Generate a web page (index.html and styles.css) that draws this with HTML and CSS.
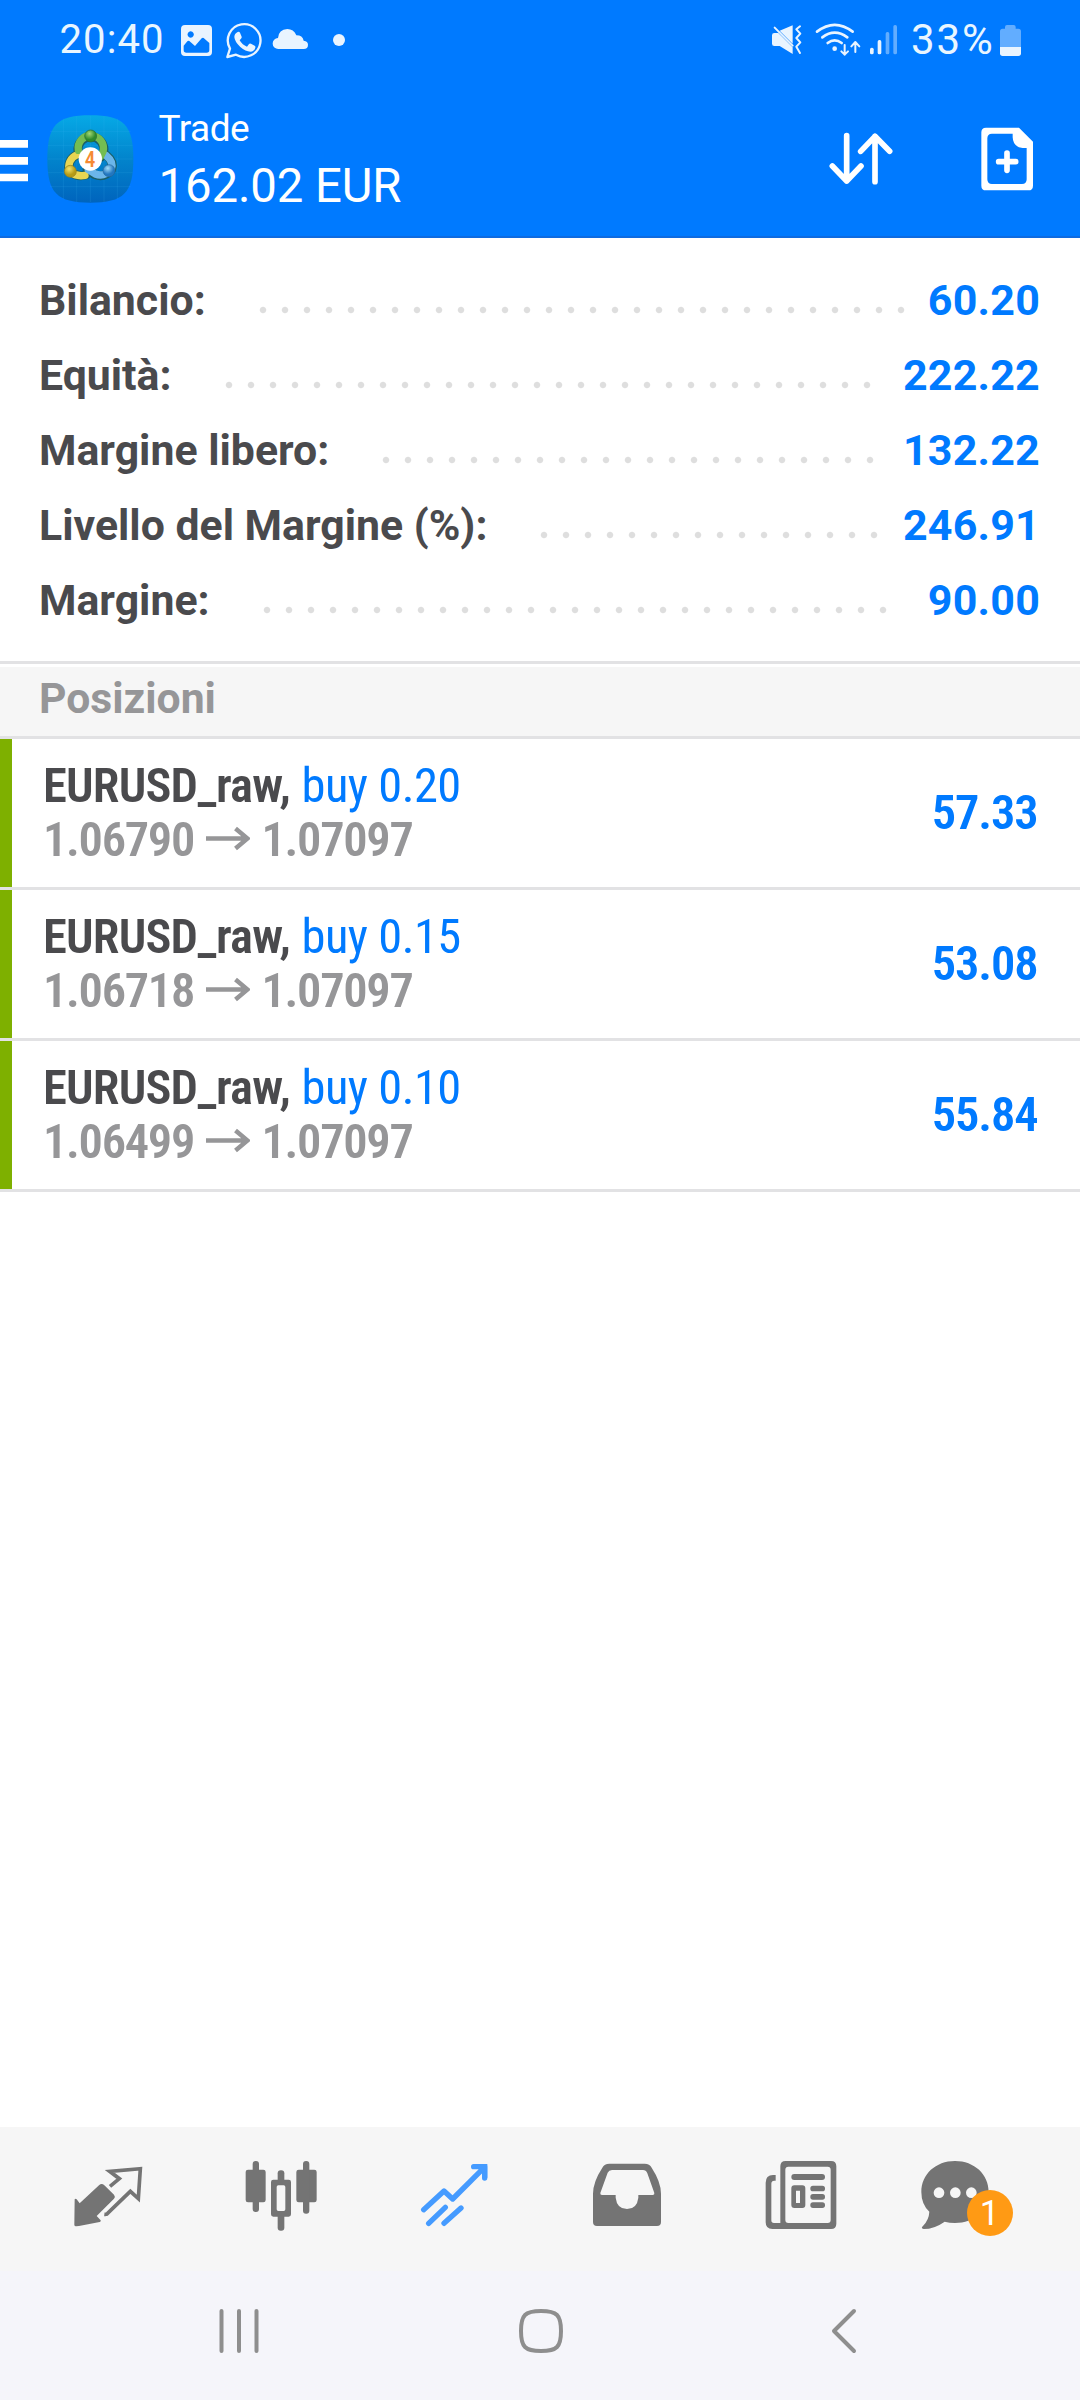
FILE: index.html
```html
<!DOCTYPE html>
<html lang="it">
<head>
<meta charset="utf-8">
<title>Trade</title>
<link rel="stylesheet" href="styles.css">
</head>
<body>
<div class="screen">
  <header class="header">
    <div class="status">
      <span class="clock">20:40</span>
      <svg class="st-image" viewBox="534 0 111 240"><path fill-rule="evenodd" d="M555 75h69q12 0 12 12v69q0 12-12 12h-69q-12 0-12-12V87q0-12 12-12zM551 137v13q0 8 8 8h61q8 0 8-8v-21l-17-15q-3-2-6 1l-20 23-17-15q-3-2-6 1zM572 94a9.500 9.500 0 1 0 .1 0z"/></svg>
      <svg class="st-chat" viewBox="666 0 126 240"><path class="line" stroke-width="7" stroke-linejoin="round" d="M682 171l8-25a49 49 0 1 1 18 18z"/><path d="M713 96q5-2 7 2l5 12q1 3-2 6l-4 5q8 14 22 19l6-8q2-3 6-1l11 6q3 2 2 6-3 11-15 12-14 0-30-14-17-16-18-30 0-10 10-15z"/></svg>
      <svg class="st-cloud" viewBox="810 0 123 240"><path d="M835 147a16 16 0 0 1-1-33q2-26 28-27 19 0 27 19 19 0 22 16 13 2 13 12 0 13-13 13z"/></svg>
      <svg class="st-dot" viewBox="990 0 54 240"><circle cx="1017" cy="120" r="18"/></svg>
      <svg class="st-mute" viewBox="84 0 114 240"><path d="M119 92l39-16v55zM103 99h12l43 43v20l-39-24h-16q-7 0-7-7v-25q0-7 7-7z"/><path class="line" stroke-width="6" stroke-linecap="round" stroke-linejoin="round" d="M104 83l54 54M180 79l-11 9 12 13-12 13 12 13-12 13 11 19"/></svg>
      <svg class="st-wifi" viewBox="219 0 150 240"><path class="line" stroke-width="8" stroke-linecap="round" d="M231 95q53-41 107 0M247 112q37-28 75 0M263 129q21-16 42 0"/><circle cx="284" cy="146" r="7"/><path class="line" stroke-width="6" stroke-linecap="round" stroke-linejoin="round" d="M314 135v29m-10-10l10 10 10-10M346 156v-29m-12 12l12-13 12 13"/></svg>
      <svg class="st-signal" viewBox="384 0 96 240"><rect x="390" y="143" width="11" height="20" rx="5"/><rect x="413" y="120" width="11" height="43" rx="5"/><g opacity=".42"><rect x="437" y="96" width="11" height="67" rx="5"/><rect x="460" y="75" width="11" height="88" rx="5"/></g></svg>
      <span class="charge">33%</span>
      <svg class="st-battery" viewBox="774 0 78 240"><path opacity=".42" d="M780 141V94q0-8 8-8h7v-5q0-6 6-6h20q6 0 6 6v5h8q8 0 8 8v47z"/><path d="M780 141h63v19q0 8-8 8h-47q-8 0-8-8z"/></svg>
    </div>
    <div class="app-bar">
      <svg class="menu" viewBox="0 240 120 474"><path fill="#fff" d="M0 420h84v23H0zM0 471h84v23H0zM0 521h84v23H0z"/></svg>
      <svg class="logo" viewBox="0 -84 300 474">
        <defs>
          <linearGradient id="bg" x1="0" y1="0" x2="0" y2="1"><stop offset="0" stop-color="#06a9e6"/><stop offset=".5" stop-color="#0284cc"/><stop offset="1" stop-color="#0064bd"/></linearGradient>
          <radialGradient id="green" cx=".4" cy=".3"><stop offset="0" stop-color="#a5d873"/><stop offset="1" stop-color="#2d8a2b"/></radialGradient>
          <radialGradient id="yellow" cx=".4" cy=".3"><stop offset="0" stop-color="#f6e468"/><stop offset="1" stop-color="#b59a16"/></radialGradient>
          <radialGradient id="blue" cx=".4" cy=".3"><stop offset="0" stop-color="#a3dcf8"/><stop offset="1" stop-color="#2277c0"/></radialGradient>
        </defs>
        <path fill="url(#bg)" d="M151 22c100 0 129 29 129 131s-29 131-129 131S22 255 22 153 51 22 151 22z"/>
        <path fill="none" stroke="#45bdf0" stroke-opacity=".22" stroke-width="2" d="M70 32v242M110 24v258M151 24v258M192 24v258M232 32v242M30 70h242M24 112h254M24 153h254M24 194h254M30 236h242"/>
        <g fill="none" stroke-linecap="round">
          <path stroke="#1b5f66" stroke-width="27" d="M114 129a39 39 0 1 1 77 4l-9 15M112 140a39 39 0 0 0-23 51q22 17 50 10M198 141q25 20 17 43-22 27-50 16l-24-14"/>
          <path stroke="#e8d552" stroke-width="22" d="M112 140a39 39 0 0 0-23 51q20 16 46 11"/>
          <path stroke="#6bb6ea" stroke-width="22" d="M198 142q24 20 16 41-22 26-48 15l-21-13"/>
          <path stroke="#74bd52" stroke-width="22" d="M115 127a38 38 0 1 1 74 4l-8 15"/>
        </g>
        <circle cx="152" cy="84" r="18" fill="url(#green)" stroke="#276d30" stroke-width="2"/>
        <circle cx="91" cy="190" r="18" fill="url(#yellow)" stroke="#937f1d" stroke-width="2"/>
        <circle cx="207" cy="188" r="18" fill="url(#blue)" stroke="#25669c" stroke-width="2"/>
        <circle cx="151" cy="153" r="35" fill="#fff"/>
        <text x="150" y="176" text-anchor="middle" class="logo-digit">4</text>
      </svg>
      <div class="title"><div class="title-name">Trade</div><div class="title-sum">162.02 EUR</div></div>
      <svg class="sort" viewBox="240 240 240 474"><path fill="none" stroke="#fff" stroke-width="17" stroke-linecap="round" stroke-linejoin="round" d="M320 407v136M277 498l43 45 43-45M405 545V409M362 454l43-45 44 45"/></svg>
      <svg class="add" viewBox="699 240 201 474"><path fill="#fff" fill-rule="evenodd" d="M738 383h99l42 42v132q0 14-14 14H738q-14 0-14-14V397q0-14 14-14zM756 401q-14 0-14 14v123q0 14 14 14h90q14 0 14-14v-94h-12q-29-3-30-32v-11z"/><path stroke="#fff" stroke-width="17" stroke-linecap="round" d="M776 485h51M801 459v52"/></svg>
    </div>
  </header>

  <section class="summary">
    <div class="sum-row"><span class="label">Bilancio:</span><i class="dots" style="--count:30"></i><span class="value">60.20</span></div>
    <div class="sum-row"><span class="label">Equità:</span><i class="dots" style="--count:30"></i><span class="value">222.22</span></div>
    <div class="sum-row"><span class="label">Margine libero:</span><i class="dots" style="--count:23"></i><span class="value">132.22</span></div>
    <div class="sum-row"><span class="label">Livello del Margine (%):</span><i class="dots" style="--count:16"></i><span class="value">246.91</span></div>
    <div class="sum-row"><span class="label">Margine:</span><i class="dots" style="--count:29"></i><span class="value">90.00</span></div>
  </section>

  <h2 class="section-title">Posizioni</h2>

  <main class="positions">
    <article class="position">
      <div class="info">
        <div class="deal"><b>EURUSD_raw,</b><span class="side">buy 0.20</span></div>
        <div class="prices"><span>1.06790</span><svg class="arrow" viewBox="0 0 44 54"><path d="M0 25.500h41M29.500 15.500l12 10-12 10"/></svg><span>1.07097</span></div>
      </div>
      <div class="profit">57.33</div>
    </article>
    <article class="position">
      <div class="info">
        <div class="deal"><b>EURUSD_raw,</b><span class="side">buy 0.15</span></div>
        <div class="prices"><span>1.06718</span><svg class="arrow" viewBox="0 0 44 54"><path d="M0 25.500h41M29.500 15.500l12 10-12 10"/></svg><span>1.07097</span></div>
      </div>
      <div class="profit">53.08</div>
    </article>
    <article class="position">
      <div class="info">
        <div class="deal"><b>EURUSD_raw,</b><span class="side">buy 0.10</span></div>
        <div class="prices"><span>1.06499</span><svg class="arrow" viewBox="0 0 44 54"><path d="M0 25.500h41M29.500 15.500l12 10-12 10"/></svg><span>1.07097</span></div>
      </div>
      <div class="profit">55.84</div>
    </article>
  </main>

  <nav class="tabs">
    <div class="tab"><svg viewBox="61 120 288 270">
      <path d="M105 268q2-4 6 0l9 12 58-54q8-8 16 0l29 28q5 6 0 12l-52 52 12 13q2 4-3 5l-62 12-9 1q-5 0-5-5z"/>
      <path class="line" stroke-width="11" d="M211 229l28-23-29-22 92-8-6 90-24-22-67 65q-3 5-11 4"/>
    </svg></div>
    <div class="tab"><svg viewBox="579 120 288 270">
      <rect x="617" y="179" width="60" height="98" rx="7"/><rect x="638" y="153" width="19" height="153" rx="9"/>
      <rect x="769" y="179" width="61" height="98" rx="7"/><rect x="789" y="153" width="19" height="158" rx="9"/>
      <rect x="713" y="181" width="20" height="40" rx="9"/><rect x="713" y="308" width="20" height="54" rx="9"/>
      <path fill-rule="evenodd" d="M700 209h46q7 0 7 7v97q0 7-7 7h-46q-7 0-7-7v-97q0-7 7-7zM715 226q-5 0-5 5v67q0 5 5 5h16q5 0 5-5v-67q0-5-5-5z"/>
    </svg></div>
    <div class="tab active"><svg viewBox="1097 120 288 270">
      <path class="line" stroke-width="16" stroke-linecap="round" stroke-linejoin="round" d="M1150 299l61-56 26 24 92-92M1300 170h33v34M1165 340l50-48M1211 340l51-46"/><path d="M1308 162h33v42l-12-14-14-14z"/>
    </svg></div>
    <div class="tab"><svg viewBox="55 120 288 270">
      <path fill-rule="evenodd" d="M149 161h106q15 0 21 12 28 43 28 78v85q0 12-12 12H112q-12 0-12-12v-85q0-35 28-78 6-12 21-12zM157 180q-9 0-13 8l-22 61q-1 6 5 6h41v8q4 34 34 34t34-34v-8h43q6 0 5-6l-21-59q-4-10-13-10z"/>
    </svg></div>
    <div class="tab"><svg viewBox="573 120 288 270">
      <path fill-rule="evenodd" d="M677 153h136q16 0 16 16v172q0 16-16 16H637q-20 0-20-20V218q0-22 22-23h8v17h-4q-9 0-9 9v110q0 8 8 8h19V169q0-16 16-16zM685 170q-9 0-9 9v151q0 9 9 9h118q9 0 9-9V179q0-9-9-9z"/>
      <rect x="694" y="192" width="101" height="18" rx="9"/><rect x="751" y="227" width="44" height="17" rx="8"/><rect x="751" y="252" width="44" height="17" rx="8"/><rect x="751" y="277" width="44" height="17" rx="8"/>
      <path fill-rule="evenodd" d="M703 226h24q9 0 9 9v50q0 9-9 9h-24q-9 0-9-9v-50q0-9 9-9zM708 242v37h12v-37z"/>
    </svg></div>
    <div class="tab"><div class="tab-icon"><svg class="wide" viewBox="1079 120 312 270">
      <path d="M1184 153c58 0 101 40 101 93s-43 93-101 93q-17 0-31-4-31 22-63 22-10-2-2-9 18-19 19-43-24-22-24-59c0-53 43-93 101-93z"/>
      <circle class="hole" cx="1136" cy="248" r="16"/><circle class="hole" cx="1185" cy="248" r="16"/><circle class="hole" cx="1233" cy="248" r="16"/>
    </svg><span class="badge">1</span></div></div>
  </nav>

  <nav class="system">
    <svg viewBox="0 0 60 60"><path d="M12.500 11v40M30 11v40M47.500 11v40"/></svg>
    <svg viewBox="0 0 60 60"><path d="M30 11c16 0 20 4 20 20s-4 20-20 20-20-4-20-20 4-20 20-20z"/></svg>
    <svg viewBox="0 0 60 60"><path d="M41 11L21 31l20 20"/></svg>
  </nav>
</div>
</body>
</html>
```
FILE: styles.css
```css
* { box-sizing: border-box; margin: 0; padding: 0; }
body { background: #fff; font-family: Roboto, "Liberation Sans", sans-serif; }
svg { display: block; flex: none; }
.screen { width: 1080px; height: 2400px; display: flex; flex-direction: column; background: #fff; white-space: nowrap; overflow: hidden; }

/* header */
.header { height: 238px; background: #007aff; border-bottom: 2px solid #0f6be0; color: #fff; flex: none; }
.status { height: 80px; display: flex; align-items: flex-start; padding: 0 56px 0 59.5px; line-height: 80px; font-size: 40px; letter-spacing: 1.1px; color: #e9f6ff; }
.status svg { height: 80px; fill: #e9f4ff; }
.status .line { fill: none; stroke: #e9f4ff; }
.clock { width: 118.5px; }
.st-image { width: 37px; }
.st-chat { width: 42px; margin-left: 7px; }
.st-cloud { width: 41px; margin-left: 6px; }
.st-dot { width: 18px; margin-left: 19px; }
.st-mute { width: 38px; margin-left: auto; }
.st-wifi { width: 50px; margin-left: 7px; }
.st-signal { width: 32px; margin-left: 5px; }
.charge { width: 87px; margin-left: 11px; font-size: 42px; letter-spacing: 1.9px; }
.st-battery { width: 26px; }
.app-bar { height: 158px; display: flex; align-items: flex-start; padding-right: 40px; }
.app-bar svg { height: 158px; }
.menu { width: 40px; }
.logo { width: 100px; }
.logo-digit { font: 500 64px "Roboto Condensed", Roboto, sans-serif; fill: #f58a33; }
.title { margin: 23px auto 0 18.5px; }
.title-name { font-size: 37px; line-height: 51px; letter-spacing: -.5px; }
.title-sum { font-size: 47.300px; line-height: 64px; letter-spacing: -.1px; }
.sort { width: 80px; margin-right: 73.500px; }
.add { width: 67px; }

/* account summary */
.summary { padding: 25px 40px 23px 39px; font-size: 43px; font-weight: 700; line-height: 75px; flex: none; }
.sum-row { display: flex; height: 75px; }
.label { color: #4a4a4d; font-size: 42.800px; }
.dots { width: calc(var(--count) * 22px); height: 22px; margin: 36px auto 0 46px; background: radial-gradient(circle at center, #dedede 2.700px, transparent 3.700px) 0 0 / 22px 22px; }
.value { color: #007aff; letter-spacing: .2px; }

.section-title { height: 78px; border-top: 3px solid #e2e2e4; border-bottom: 3px solid #e2e2e4; box-shadow: inset 0 3px #fff; background: #f6f6f6; padding-left: 39px; font-size: 42.700px; font-weight: 700; line-height: 69px; color: #969698; flex: none; }

/* open positions */
.position { height: 151px; display: flex; border-bottom: 3px solid #e2e2e4; padding-right: 42.500px; background: linear-gradient(#7eb000, #7eb000) 0 0 / 12px 148px no-repeat; font-family: "Roboto Condensed", Roboto, sans-serif; font-size: 48.500px; font-weight: 650; }
.info { padding: 20px 0 0 43px; flex: 1; line-height: 54px; }
.deal { display: flex; color: #4a4a4d; height: 54px; }
.deal b { font-weight: 650; letter-spacing: -.8px; width: 258.500px; }
.side { font-weight: 400; color: #007aff; letter-spacing: -.5px; }
.prices { display: flex; color: #969698; letter-spacing: -1.300px; }
.prices span { width: 163px; }
.arrow { width: 44px; height: 54px; margin-right: 11.500px; fill: none; stroke: #969698; stroke-width: 4.500px; }
.profit { line-height: 148px; letter-spacing: -1.100px; color: #007aff; }

/* app tabs */
.tabs { margin-top: auto; height: 144px; flex: none; display: flex; padding: 23px 22px 0; background: #f6f6f6; }
.tab { flex: 1; display: flex; justify-content: center; fill: #747474; stroke: none; }
.tab svg { width: 96px; height: 90px; }
.tab svg.wide { width: 104px; }
.tab .line { fill: none; stroke: #747474; }
.tab.active { fill: #459bff; }
.tab.active .line { stroke: #459bff; }
.tab-icon { position: relative; }
.hole { fill: #f6f6f6; }
.badge { position: absolute; left: 47px; top: 40px; width: 46px; height: 46px; border-radius: 50%; background: #ff9a14; color: #fff; font-size: 35px; line-height: 47px; text-align: center; }

/* system navigation */
.system { height: 129px; flex: none; display: flex; justify-content: space-between; padding: 29px 207px 0 209px; background: #f5f5fa; }
.system svg { width: 60px; height: 60px; fill: none; stroke: #8e8e8e; stroke-width: 4; stroke-linecap: round; stroke-linejoin: round; }
```
